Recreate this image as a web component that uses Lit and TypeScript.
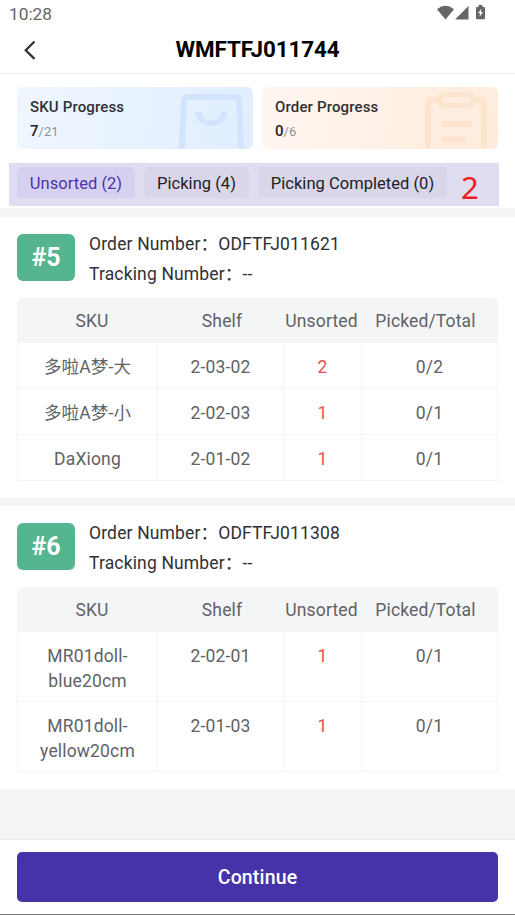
import { LitElement, html, css, svg } from "lit";
import { customElement, property } from "lit/decorators.js";

interface Row {
  sku: string;
  shelf: string;
  unsorted: number;
  picked: string;
}

interface Order {
  slot: string;
  order: string;
  tracking: string;
  rows: Row[];
}

const ORDERS: Order[] = [
  {
    slot: "#5",
    order: "ODFTFJ011621",
    tracking: "--",
    rows: [
      { sku: "多啦A梦-大", shelf: "2-03-02", unsorted: 2, picked: "0/2" },
      { sku: "多啦A梦-小", shelf: "2-02-03", unsorted: 1, picked: "0/1" },
      { sku: "DaXiong", shelf: "2-01-02", unsorted: 1, picked: "0/1" },
    ],
  },
  {
    slot: "#6",
    order: "ODFTFJ011308",
    tracking: "--",
    rows: [
      { sku: "MR01doll-blue20cm", shelf: "2-02-01", unsorted: 1, picked: "0/1" },
      { sku: "MR01doll-yellow20cm", shelf: "2-01-03", unsorted: 1, picked: "0/1" },
    ],
  },
];

const bag = svg`
  <path d="M4.800 62 L6.900 14 Q7.100 10 11 10 H58 Q61.800 10 62 14 L64.200 62" fill="none" stroke="#d3e5fe" stroke-width="6"/>
  <path d="M21 25 C21 40 47 40 47 25" fill="none" stroke="#d3e5fe" stroke-width="6"/>`;

const clipboard = svg`
  <path d="M17 13 H12 Q6 13 6 19 V64 M51 13 H56 Q62 13 62 19 V64" fill="none" stroke="#fce4cf" stroke-width="6"/>
  <rect x="17.500" y="7.500" width="33.500" height="11" rx="5.500" fill="none" stroke="#fce4cf" stroke-width="5"/>
  <path d="M19 37 H50 M19 52.500 H43" fill="none" stroke="#fce4cf" stroke-width="6"/>`;

@customElement("order-card")
class OrderCard extends LitElement {
  @property({ attribute: false }) data!: Order;

  static styles = css`
    :host {
      display: block;
      background: #fff;
      padding: 17px 17px;
    }
    .top {
      display: flex;
      gap: 14px;
      height: 64px;
    }
    .slot {
      width: 58px;
      height: 47px;
      border-radius: 6px;
      background: #54b590;
      color: #fff;
      font-size: 25px;
      font-weight: 700;
      line-height: 47px;
      text-align: center;
    }
    .lines {
      margin-top: -5px;
      font-size: 17.5px;
      line-height: 30px;
      letter-spacing: 0.15px;
      color: #303133;
    }
    .head {
      display: grid;
      grid-template-columns: 150px 110px 89px 119px;
      height: 45px;
      line-height: 46px;
      background: #f4f5f7;
      border-radius: 6px 6px 0 0;
      font-size: 17.5px;
      letter-spacing: 0.15px;
      color: #606266;
      text-align: center;
    }
    .row {
      display: grid;
      grid-template-columns: 140px 126px 78px 136px;
      min-height: 46px;
      border-left: 1px solid #f3f4f6;
      border-bottom: 1px solid #f3f4f6;
      box-sizing: border-box;
      line-height: 24.5px;
      font-size: 17.5px;
      letter-spacing: 0.15px;
      color: #606266;
      text-align: center;
    }
    .row > div {
      padding: 12px 18px 8px;
      border-right: 1px solid #f3f4f6;
    }
    .row .red {
      color: #e8504a;
    }
  `;

  render() {
    const d = this.data;
    return html`
      <div class="top">
        <div class="slot">${d.slot}</div>
        <div class="lines">
          <div>Order Number：${d.order}</div>
          <div>Tracking Number：${d.tracking}</div>
        </div>
      </div>
      <div class="head">
        <div>SKU</div><div>Shelf</div><div>Unsorted</div><div>Picked/Total</div>
      </div>
      ${d.rows.map(
        (r) => html`<div class="row">
          <div>${r.sku}</div>
          <div>${r.shelf}</div>
          <div class="red">${r.unsorted}</div>
          <div>${r.picked}</div>
        </div>`
      )}
    `;
  }
}

@customElement("app-root")
class AppRoot extends LitElement {
  static styles = css`
    :host {
      display: flex;
      flex-direction: column;
      width: 515px;
      height: 915px;
      overflow: hidden;
      background: #f4f5f7;
      font-family: Roboto, "Noto Sans CJK SC", sans-serif;
    }
    .status {
      display: flex;
      justify-content: space-between;
      height: 26px;
      padding: 0 28px 0 9px;
      background: #fff;
      color: #666;
      font-size: 17.3px;
      line-height: 28px;
    }
    .bar {
      display: grid;
      grid-template-columns: 60px 1fr 60px;
      height: 47px;
      background: #fff;
      border-bottom: 1px solid #ededed;
      align-items: center;
    }
    .title {
      text-align: center;
      font-size: 22.4px;
      font-weight: 700;
      letter-spacing: -0.1px;
      color: #000;
      padding-bottom: 2px;
    }
    .summary {
      height: 134px;
      background: #fff;
      box-sizing: border-box;
      padding-top: 13px;
      margin-bottom: 9px;
    }
    .cards {
      display: grid;
      grid-template-columns: 236px 236px;
      gap: 9px;
      padding-left: 17px;
    }
    .card {
      display: flex;
      justify-content: space-between;
      height: 62px;
      border-radius: 6px;
      overflow: hidden;
    }
    .sku {
      background: linear-gradient(100deg, #eff6ff, #e0eeff);
    }
    .order {
      background: linear-gradient(100deg, #fff6f0, #feebdc);
    }
    .info {
      padding: 8px 0 0 13px;
    }
    .label {
      font-size: 15px;
      font-weight: 500;
      letter-spacing: 0.15px;
      line-height: 24px;
      color: #303133;
    }
    .count {
      font-size: 13px;
      line-height: 24px;
      color: #909399;
    }
    .count b {
      font-size: 15px;
      font-weight: 500;
      color: #222;
    }
    .art {
      width: 68px;
      height: 62px;
      margin-right: 8px;
    }
    .tabs {
      display: flex;
      gap: 9px;
      height: 43px;
      width: 490px;
      box-sizing: border-box;
      margin: 14px 0 0 9px;
      padding: 4px 0 0 8px;
      background: #e1ddf1;
    }
    .tab {
      height: 31px;
      border-radius: 5px;
      background: #d9d6e9;
      color: #202025;
      font-size: 16.5px;
      line-height: 33px;
      letter-spacing: 0.03px;
      text-align: center;
      white-space: nowrap;
    }
    .t1 {
      width: 118px;
      background: #d7d1f1;
      color: #4834aa;
    }
    .t2 {
      width: 105px;
    }
    .t3 {
      width: 189px;
    }
    .note {
      margin-left: 5px;
      font-family: "Noto Sans", sans-serif;
      font-size: 31px;
      line-height: 40px;
      color: #f01c24;
    }
    .gap {
      height: 8px;
      flex: none;
    }
    .footer {
      margin-top: auto;
      height: 76px;
      box-sizing: border-box;
      padding: 12px 17px 0;
      background: #fff;
      border-top: 1px solid #ebebeb;
      border-bottom: 1px solid #77777b;
    }
    .button {
      height: 50px;
      border-radius: 5px;
      background: #4733a9;
      color: #fff;
      font-size: 19.5px;
      font-weight: 500;
      line-height: 52px;
      letter-spacing: 0.15px;
      text-align: center;
    }
  `;

  render() {
    return html`
      <div class="status">
        <span>10:28</span>
        <svg width="50" height="26" viewBox="437 0 50 26" fill="#666">
          <path d="M437 9.300 Q445.500 2.400 454 9.300 L445.500 19.400Z" />
          <path d="M455 19.500 L468.500 6 V19.500Z" />
          <path d="M478.500 5 H482.500 V7 H484 Q485 7 485 8 V18.200 Q485 19.200 484 19.200 H477 Q476 19.200 476 18.200 V8 Q476 7 477 7 H478.500Z" />
          <path d="M481.500 8.500 L478 13.200 H480 L479.600 16.800 L483 12 H481Z" fill="#fff" />
        </svg>
      </div>
      <div class="bar">
        <svg width="60" height="46" viewBox="0 0 60 46">
          <path d="M34.500 14.500 L25.700 23.200 L34.500 31.900" fill="none" stroke="#303133" stroke-width="2.200" />
        </svg>
        <div class="title">WMFTFJ011744</div>
      </div>
      <div class="summary">
        <div class="cards">
          <div class="card sku">
            <div class="info">
              <div class="label">SKU Progress</div>
              <div class="count"><b>7</b>/21</div>
            </div>
            <svg class="art" viewBox="0 0 68 62">${bag}</svg>
          </div>
          <div class="card order">
            <div class="info">
              <div class="label">Order Progress</div>
              <div class="count"><b>0</b>/6</div>
            </div>
            <svg class="art" viewBox="0 0 68 62">${clipboard}</svg>
          </div>
        </div>
        <div class="tabs">
          <div class="tab t1">Unsorted (2)</div>
          <div class="tab t2">Picking (4)</div>
          <div class="tab t3">Picking Completed (0)</div>
          <div class="note">2</div>
        </div>
      </div>
      <order-card .data=${ORDERS[0]}></order-card>
      <div class="gap"></div>
      <order-card .data=${ORDERS[1]}></order-card>
      <div class="footer"><div class="button">Continue</div></div>
    `;
  }
}
